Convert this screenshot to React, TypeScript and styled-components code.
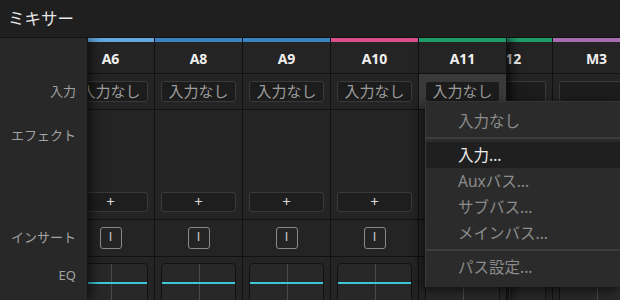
import styled, { createGlobalStyle, css } from "styled-components";

const GlobalStyle = createGlobalStyle`
  html, body {
    margin: 0;
    padding: 0;
    background: #1e1e1e;
  }
  body {
    width: 620px;
    height: 300px;
    overflow: hidden;
    font-family: "Noto Sans", "Noto Sans CJK JP", sans-serif;
  }
  * {
    box-sizing: border-box;
  }
`;

type Channel = {
  name: string;
  color: string;
  input?: string;
  selected?: boolean;
  tucked?: boolean;
};

const CHANNELS: Channel[] = [
  { name: "A6", color: "#62a8dc", input: "入力なし" },
  { name: "A8", color: "#3a83bf", input: "入力なし" },
  { name: "A9", color: "#3a83bf", input: "入力なし" },
  { name: "A10", color: "#d84f8b", input: "入力なし" },
  { name: "A11", color: "#1f9b6a", input: "入力なし", selected: true },
  { name: "A12", color: "#1f9b6a", tucked: true },
  { name: "M3", color: "#a76caf" },
];

const MENU = [
  { label: "入力なし", kind: "muted" },
  { sep: true },
  { label: "入力...", kind: "active" },
  { label: "Auxバス...", kind: "muted" },
  { label: "サブバス...", kind: "muted" },
  { label: "メインバス...", kind: "muted" },
  { sep: true },
  { label: "パス設定...", kind: "muted" },
];

export default function App() {
  return (
    <>
      <GlobalStyle />
      <Window>
        <TitleBar>ミキサー</TitleBar>
        <Body>
          <Sidebar>
            <SideSpacer />
            <SideLabel $h={36}>入力</SideLabel>
            <SideLabel $h={110} $top={17}>
              エフェクト
            </SideLabel>
            <SideLabel $h={37}>インサート</SideLabel>
            <SideLabel $h={43} $top={10}>
              EQ
            </SideLabel>
          </Sidebar>
          <Strips>
            <StripRow>
              {CHANNELS.map((ch) => (
                <Strip key={ch.name} $selected={ch.selected} $tucked={ch.tucked}>
                  <ColorBar $color={ch.color} />
                  <StripHeader>{ch.name}</StripHeader>
                  <InputCell $selected={ch.selected}>
                    <InputButton>{ch.input}</InputButton>
                  </InputCell>
                  <EffectsCell>
                    <PlusButton>+</PlusButton>
                  </EffectsCell>
                  <InsertCell>
                    <InsertButton>I</InsertButton>
                  </InsertCell>
                  <EqCell>
                    <EqBox>
                      <EqCurve />
                    </EqBox>
                  </EqCell>
                </Strip>
              ))}
            </StripRow>
          </Strips>
          <Menu>
            {MENU.map((item, i) =>
              item.sep ? (
                <MenuSeparator key={i} />
              ) : (
                <MenuItem key={i} $active={item.kind === "active"}>
                  {item.label}
                </MenuItem>
              )
            )}
          </Menu>
        </Body>
      </Window>
    </>
  );
}

const Window = styled.div`
  width: 620px;
  height: 300px;
  display: flex;
  flex-direction: column;
  background: #1e1e1e;
`;

const TitleBar = styled.div`
  height: 38px;
  flex: none;
  display: flex;
  align-items: center;
  padding-left: 8px;
  padding-bottom: 2px;
  font-size: 16.5px;
  color: #e6e6e6;
  background: #1f1f1f;
  border-bottom: 1px solid #121212;
`;

const Body = styled.div`
  position: relative;
  flex: 1;
  display: flex;
  overflow: hidden;
`;

const Sidebar = styled.div`
  width: 88px;
  flex: none;
  display: flex;
  flex-direction: column;
  background: #282828;
  border-right: 1px solid #161616;
  box-shadow: 4px 0 10px rgba(0, 0, 0, 0.55);
  z-index: 2;
`;

const SideSpacer = styled.div`
  height: 36px;
`;

const SideLabel = styled.div<{ $h: number; $top?: number }>`
  height: ${(p) => p.$h}px;
  padding-right: 11px;
  font-size: 13px;
  line-height: 16px;
  color: #a3a3a3;
  text-align: right;
  display: flex;
  justify-content: flex-end;
  align-items: ${(p) => (p.$top ? "flex-start" : "center")};
  padding-top: ${(p) => p.$top ?? 0}px;
  padding-bottom: ${(p) => (p.$top ? 0 : 3)}px;
`;

const Strips = styled.div`
  flex: 1;
  overflow: hidden;
  background: #232323;
`;

const StripRow = styled.div`
  display: flex;
  margin-left: -21px;
`;

const Strip = styled.div<{ $selected?: boolean; $tucked?: boolean }>`
  width: 88px;
  flex: none;
  display: flex;
  flex-direction: column;
  background: #242424;
  border-right: 1px solid #111;
  position: relative;
  ${(p) =>
    p.$selected &&
    css`
      z-index: 1;
      box-shadow: 5px 0 8px rgba(0, 0, 0, 0.6);
    `}
  ${(p) =>
    p.$tucked &&
    css`
      margin-left: -42px;
    `}
`;

const ColorBar = styled.div<{ $color: string }>`
  height: 4px;
  background: ${(p) => p.$color};
`;

const StripHeader = styled.div`
  height: 32px;
  display: flex;
  align-items: center;
  justify-content: center;
  padding-top: 2px;
  font-size: 14px;
  font-weight: 700;
  color: #f0f0f0;
  border-bottom: 1px solid #111;
`;

const InputCell = styled.div<{ $selected?: boolean }>`
  height: 36px;
  padding: 7px 6px 0;
  border-bottom: 1px solid #111;
  background: ${(p) => (p.$selected ? "#3a3a3a" : "transparent")};
`;

const InputButton = styled.div`
  height: 21px;
  border: 1px solid #3a3a3a;
  border-radius: 3px;
  background: #1c1c1c;
  color: #9c9c9c;
  font-size: 15px;
  line-height: 18px;
  text-align: center;
  white-space: nowrap;
  overflow: hidden;
`;

const EffectsCell = styled.div`
  height: 110px;
  display: flex;
  flex-direction: column;
  justify-content: flex-end;
  padding: 0 6px 7px;
  border-bottom: 1px solid #111;
`;

const PlusButton = styled.div`
  height: 20px;
  border: 1px solid #3a3a3a;
  border-radius: 3px;
  background: #1e1e1e;
  color: #d8d8d8;
  font-size: 15px;
  line-height: 17px;
  text-align: center;
`;

const InsertCell = styled.div`
  height: 37px;
  display: flex;
  align-items: center;
  justify-content: center;
  border-bottom: 1px solid #111;
`;

const InsertButton = styled.div`
  width: 22px;
  height: 22px;
  border: 1.5px solid #8a8a8a;
  border-radius: 3px;
  color: #c8c8c8;
  font-family: "DejaVu Sans", sans-serif;
  font-size: 12px;
  line-height: 19px;
  text-align: center;
`;

const EqCell = styled.div`
  flex: 1;
  padding: 6px 6px 0;
`;

const EqBox = styled.div`
  position: relative;
  height: 46px;
  border: 1px solid #121212;
  border-radius: 4px;
  background: #282828;
  overflow: hidden;

  &::before {
    content: "";
    position: absolute;
    left: 50%;
    top: 0;
    bottom: 0;
    width: 1px;
    background: #4a4a4a;
  }
`;

const EqCurve = styled.div`
  position: absolute;
  left: 0;
  right: 0;
  top: 18px;
  height: 2px;
  background: #3cc6d6;
`;

const Menu = styled.div`
  position: absolute;
  left: 425px;
  top: 63px;
  right: 0;
  height: 186px;
  padding: 6px 0 4px;
  background: #2b2b2b;
  border-left: 1px solid #3a3a3a;
  border-top: 1px solid #333;
  box-shadow: -3px 3px 10px rgba(0, 0, 0, 0.6);
  z-index: 3;
`;

const MenuItem = styled.div<{ $active?: boolean }>`
  height: 26px;
  display: flex;
  align-items: center;
  padding-left: 32px;
  padding-bottom: 1px;
  font-size: 15.5px;
  color: ${(p) => (p.$active ? "#ececec" : "#8c8c8c")};
  background: ${(p) => (p.$active ? "#1f1f1f" : "transparent")};
`;

const MenuSeparator = styled.div`
  height: 8px;
  display: flex;
  align-items: center;

  &::after {
    content: "";
    flex: 1;
    height: 2px;
    background: #3d3d3d;
  }
`;
